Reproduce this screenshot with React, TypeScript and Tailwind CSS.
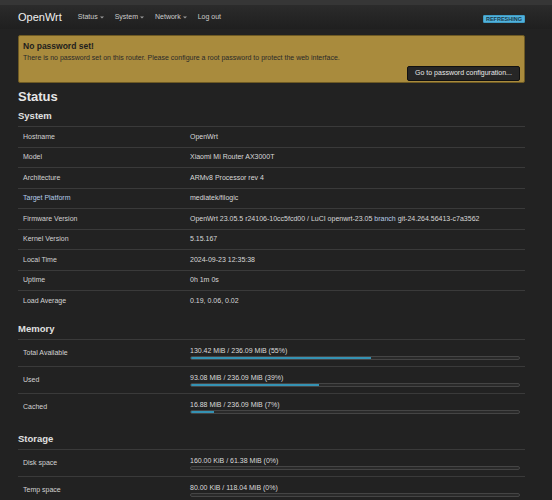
import React from "react";

const systemRows: { label: string; value: React.ReactNode; blue?: boolean }[] = [
  { label: "Hostname", value: "OpenWrt" },
  { label: "Model", value: "Xiaomi Mi Router AX3000T" },
  { label: "Architecture", value: "ARMv8 Processor rev 4" },
  { label: "Target Platform", value: "mediatek/filogic", blue: true },
  {
    label: "Firmware Version",
    value: (
      <>
        OpenWrt 23.05.5 r24106-10cc5fcd00 / LuCI openwrt-23.05{" "}
        <span className="text-[#b9cfe8]">branch</span> git-24.264.56413-c7a3562
      </>
    ),
  },
  { label: "Kernel Version", value: "5.15.167" },
  { label: "Local Time", value: "2024-09-23 12:35:38" },
  { label: "Uptime", value: "0h 1m 0s" },
  { label: "Load Average", value: "0.19, 0.06, 0.02" },
];

const memoryRows = [
  { label: "Total Available", value: "130.42 MiB / 236.09 MiB (55%)", pct: 55 },
  { label: "Used", value: "93.08 MiB / 236.09 MiB (39%)", pct: 39 },
  { label: "Cached", value: "16.88 MiB / 236.09 MiB (7%)", pct: 7 },
];

const storageRows = [
  { label: "Disk space", value: "160.00 KiB / 61.38 MiB (0%)", pct: 0 },
  { label: "Temp space", value: "80.00 KiB / 118.04 MiB (0%)", pct: 0 },
];

const Caret = () => (
  <svg
    width="4"
    height="3"
    viewBox="0 0 4 3"
    className="ml-[2px] inline-block align-middle"
  >
    <path d="M0 0.5h4L2 2.5z" fill="#9a9a9a" />
  </svg>
);

const BarRow = ({
  label,
  value,
  pct,
}: {
  label: string;
  value: string;
  pct: number;
}) => (
  <div className="grid h-[27px] grid-cols-[167px_1fr] border-t border-[#3a3a3a]">
    <div className="flex items-center px-[5px] text-[#d2d2d2]">{label}</div>
    <div className="px-[5px] pt-[6px]">
      <div className="h-[10px] leading-[10px] text-[#dadada]">{value}</div>
      <div className="h-[4px] overflow-hidden rounded-[2px] border border-[#454545] bg-[#2a2a2a]">
        <div className="h-full bg-[#3592b3]" style={{ width: `${pct}%` }} />
      </div>
    </div>
  </div>
);

export default function App() {
  return (
    <div
      className="min-h-[500px] bg-[#222222] text-[7px] text-[#d0d0d0]"
      style={{ fontFamily: '"Liberation Sans", Arial, sans-serif' }}
    >
      {/* header */}
      <div className="border-t-[5px] border-[#363636] bg-gradient-to-b from-[#2b2b2b] to-[#1f1f1f]">
        <div className="flex h-[24px] items-center pl-[18px] pr-[27px]">
          <span className="text-[11px] text-[#f0f0f0]">OpenWrt</span>
          <nav className="ml-[16px] flex items-center gap-[11px] text-[7px] text-[#cccccc]">
            <span className="flex items-center">
              Status
              <Caret />
            </span>
            <span className="flex items-center">
              System
              <Caret />
            </span>
            <span className="flex items-center">
              Network
              <Caret />
            </span>
            <span>Log out</span>
          </nav>
          <span className="ml-auto mt-[3px] rounded-[1px] border border-[#3f9cc4] bg-[#52b2dc] px-[2px] text-[5.5px] leading-[6px] font-bold text-[#17384a]">
            REFRESHING
          </span>
        </div>
      </div>

      <div className="pl-[18px] pr-[27px]">
        {/* alert */}
        <div className="mt-[6px] rounded-[2px] border border-[#6e5a24] bg-[#a98b3d] px-[4px] pb-[1px] pt-[5px]">
          <div className="text-[8.5px] leading-[11px] font-bold text-[#1e1e1e]">
            No password set!
          </div>
          <div className="mt-[1px] leading-[10px] text-[#2a2a2a]">
            There is no password set on this router. Please configure a root
            password to protect the web interface.
          </div>
          <div className="mt-[3px] flex justify-end">
            <button className="h-[15px] w-[113px] rounded-[2px] border border-[#111] bg-[#262626] text-[7px] text-[#e8e8e8]">
              Go to password configuration...
            </button>
          </div>
        </div>

        <h2 className="mt-[6px] text-[13px] leading-[16px] font-bold text-[#e6e6e6]">
          Status
        </h2>

        <h3 className="mt-[5px] mb-[4px] text-[9.5px] leading-[12px] font-bold text-[#e0e0e0]">
          System
        </h3>
        <div>
          {systemRows.map((row) => (
            <div
              key={row.label}
              className="grid h-[20.5px] grid-cols-[167px_1fr] items-center border-t border-[#3a3a3a]"
            >
              <div
                className={`px-[5px] ${row.blue ? "text-[#b4cbe8]" : "text-[#d2d2d2]"}`}
              >
                {row.label}
              </div>
              <div className="whitespace-nowrap px-[5px] text-[#d8d8d8]">
                {row.value}
              </div>
            </div>
          ))}
        </div>

        <h3 className="mt-[12.5px] mb-[4px] text-[9.5px] leading-[12px] font-bold text-[#e0e0e0]">
          Memory
        </h3>
        <div>
          {memoryRows.map((r) => (
            <BarRow key={r.label} {...r} />
          ))}
        </div>

        <h3 className="mt-[13px] mb-[4px] text-[9.5px] leading-[12px] font-bold text-[#e0e0e0]">
          Storage
        </h3>
        <div>
          {storageRows.map((r) => (
            <BarRow key={r.label} {...r} />
          ))}
        </div>
      </div>
    </div>
  );
}
